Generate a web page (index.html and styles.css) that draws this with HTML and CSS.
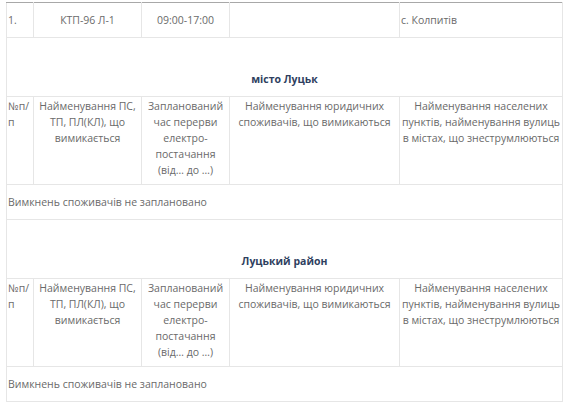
FILE: index.html
```html
<!DOCTYPE html>
<html lang="uk">
<head>
<meta charset="utf-8">
<link rel="stylesheet" href="styles.css">
</head>
<body>
<div class="wrap">
<table class="grid">
<colgroup>
<col class="c1"><col class="c2"><col class="c3"><col class="c4"><col class="c5">
</colgroup>
<tr class="row">
<td>1.</td>
<td class="ctr">КТП-96 Л-1</td>
<td class="ctr">09:00-17:00</td>
<td></td>
<td>с. Колпитів</td>
</tr>
<tr><td colspan="5" class="area">місто Луцьк</td></tr>
<tr class="head">
<td class="lft">№п/п</td>
<td>Найменування ПС, ТП, ПЛ(КЛ), що вимикається</td>
<td>Запланований час перерви електро-постачання (від… до …)</td>
<td>Найменування юридичних споживачів, що вимикаються</td>
<td>Найменування населених пунктів, найменування вулиць в містах, що знеструмлюються</td>
</tr>
<tr class="row"><td colspan="5" class="none">Вимкнень споживачів не заплановано</td></tr>
<tr><td colspan="5" class="area">Луцький район</td></tr>
<tr class="head">
<td class="lft">№п/п</td>
<td>Найменування ПС, ТП, ПЛ(КЛ), що вимикається</td>
<td>Запланований час перерви електро-постачання (від… до …)</td>
<td>Найменування юридичних споживачів, що вимикаються</td>
<td>Найменування населених пунктів, найменування вулиць в містах, що знеструмлюються</td>
</tr>
<tr class="row"><td colspan="5" class="none">Вимкнень споживачів не заплановано</td></tr>
</table>
</div>
</body>
</html>
```
FILE: styles.css
```css
html, body {
  margin: 0;
  padding: 0;
  background: #fff;
}
body {
  font-family: "Open Sans", "Noto Sans", sans-serif;
  font-size: 10.5px;
  line-height: 16px;
  color: #6a6a6a;
}
.wrap {
  padding: 2px 0 0 6px;
}
.grid {
  border-collapse: collapse;
  table-layout: fixed;
  width: 556px;
  border-top: 1px solid #a8a8a8;
  border-left: 1px solid #e6e6e6;
  border-right: 1px solid #eee;
}
.c1 { width: 27px; }
.c2 { width: 108px; }
.c3 { width: 88px; }
.c4 { width: 170px; }
.c5 { width: 163px; }
.grid td {
  border: 1px solid #e6e6e6;
  padding: 0 1px;
  vertical-align: middle;
}
.grid tr:first-child td {
  border-top: 1px solid #a8a8a8;
}
.row td {
  height: 34px;
}
.ctr {
  text-align: center;
}
.area {
  text-align: center;
  font-weight: 700;
  color: #2f3f5f;
  padding: 33px 0 9px !important;
  border-left: 1px solid #e6e6e6;
}
.head td {
  text-align: center;
  vertical-align: top;
  padding: 1px 1px 6px;
}
.head td.lft {
  text-align: left;
}
.none {
  text-align: left;
}
```
